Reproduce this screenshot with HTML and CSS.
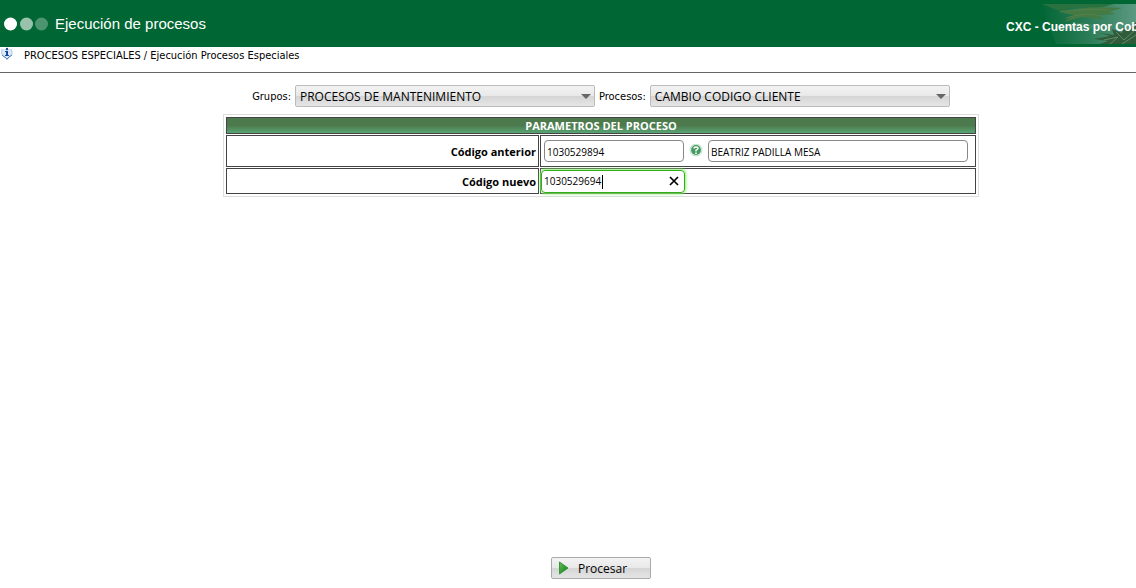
FILE: index.html
```html
<!DOCTYPE html>
<html lang="es">
<head>
  <meta charset="UTF-8">
  <meta name="viewport" content="width=device-width, initial-scale=1.0">
  <title>Ejecución de procesos</title>
  <link rel="stylesheet" href="styles.css">
</head>
<body>
  <header class="header">
    <svg class="dots" width="46" height="14" viewBox="0 0 46 14" aria-hidden="true">
      <circle cx="6.500" cy="7" r="6.5" fill="#fff"/>
      <circle cx="22.500" cy="7" r="6.5" fill="#99c2ad"/>
      <circle cx="37.500" cy="7" r="6.5" fill="#4d9470"/>
    </svg>
    <h1>Ejecución de procesos</h1>
    <div class="module">
      <svg class="leaves" width="96" height="40" viewBox="0 0 96 40" aria-hidden="true">
        <defs>
          <linearGradient id="fade" x1="0" x2="1" y1="0" y2="0">
            <stop offset="0" stop-color="#006633"/>
            <stop offset=".5" stop-color="#2b7c57"/>
            <stop offset="1" stop-color="#5c9a82"/>
          </linearGradient>
        </defs>
        <path d="M0 0H96V40H16Z" fill="url(#fade)"/>
        <path d="M2 0H74L56 5L36 3L22 8Z" fill="#2a7140"/>
        <path d="M22 9Q42 1 82 4L68 8L76 10L58 11L64 15L42 13L24 18L34 11Z" fill="#457a43"/>
        <path d="M26 14Q44 8 62 12M20 8Q40 4 70 6" stroke="#55804d" fill="none"/>
        <path d="M14 22L40 19L70 23L50 25L30 25Z" fill="#3d8763"/>
        <path d="M60 40L68 37L54 35L70 32L60 29L74 31L72 25L82 29L84 22L89 27L96 18V40Z" fill="#315b3b"/>
        <path d="M64 36L78 33L70 40M76 28L84 36L96 25M82 40L96 31" stroke="#5c8d66" fill="none"/>
      </svg>
      <span class="module-name">CXC - Cuentas por Cobrar</span>
    </div>
  </header>

  <nav class="breadcrumb">
    <svg width="14" height="14" viewBox="0 0 14 14" aria-hidden="true">
      <path d="M2 2Q0 8 5 10L7 13L9 10Q14 8 11 2" fill="#dce8f8" stroke="#b5cbe8"/>
      <path d="M2 8Q4 10 5 10L7 12L9 10L12 8" fill="none" stroke="#5584c4"/>
      <circle cx="7" cy="2" r="1.2" fill="#174a9c"/>
      <path d="M5 4H8V8H9V9H5V8H6V5H5Z" fill="#174a9c"/>
    </svg>
    <span>PROCESOS ESPECIALES / Ejecución Procesos Especiales</span>
  </nav>

  <form class="content">
    <div class="filters">
      <label for="grupos">Grupos:</label>
      <div class="select">
        <select id="grupos">
          <option>PROCESOS DE MANTENIMIENTO</option>
        </select>
      </div>
      <label for="procesos">Procesos:</label>
      <div class="select">
        <select id="procesos">
          <option>CAMBIO CODIGO CLIENTE</option>
        </select>
      </div>
    </div>

    <table class="params">
      <colgroup>
        <col class="label-col">
        <col>
      </colgroup>
      <thead>
        <tr><th colspan="2" class="title">PARAMETROS DEL PROCESO</th></tr>
      </thead>
      <tbody>
        <tr class="previous">
          <th scope="row"><label for="anterior">Código anterior</label></th>
          <td>
            <div class="fields">
              <input id="anterior" class="code" type="text" value="1030529894">
              <button type="button" class="help" aria-label="Buscar cliente">
                <svg width="14" height="14" viewBox="0 0 14 14" aria-hidden="true">
                  <circle cx="7" cy="6" r="6" fill="#e4f2e8" stroke="#b4d9c0" stroke-width=".8"/>
                  <circle cx="7" cy="6" r="4.900" fill="#459a62"/>
                  <path d="M5 4.500Q5 3 7 3T9 4.500Q9 5.500 7 6.200V7.500" fill="none" stroke="#fff" stroke-width="1.400"/>
                  <circle cx="7" cy="9.200" r=".9" fill="#fff"/>
                </svg>
              </button>
              <input class="name" type="text" value="BEATRIZ PADILLA MESA" aria-label="Nombre del cliente">
            </div>
          </td>
        </tr>
        <tr class="next">
          <th scope="row"><label for="nuevo">Código nuevo</label></th>
          <td>
            <div class="active-field">
              <input id="nuevo" type="text" value="1030529694">
              <span class="caret"></span>
              <button type="button" class="clear" aria-label="Borrar">
                <svg width="10" height="10" viewBox="0 0 10 10" aria-hidden="true">
                  <path d="M1 1L9 9M9 1L1 9" stroke="#000" stroke-width="1.700"/>
                </svg>
              </button>
            </div>
          </td>
        </tr>
      </tbody>
    </table>

    <button type="submit" class="process">
      <svg width="12" height="14" viewBox="0 0 12 14" aria-hidden="true">
        <defs>
          <linearGradient id="play" x1="0" x2="1" y1="0" y2="1">
            <stop offset="0" stop-color="#67bd63"/>
            <stop offset="1" stop-color="#087d0b"/>
          </linearGradient>
        </defs>
        <path d="M1.500 1L10 7L1.500 13Z" fill="url(#play)" stroke="#35963a"/>
      </svg>
      Procesar
    </button>
  </form>
</body>
</html>
```

FILE: styles.css
```css
* {
  box-sizing: border-box;
}
body {
  display: flex;
  flex-direction: column;
  min-height: 100vh;
  margin: 0;
  background: #fff;
  color: #000;
  font: 11px "DejaVu Sans Condensed", "DejaVu Sans", sans-serif;
}
button,
input,
select {
  color: #000;
  font-family: "Open Sans", "Noto Sans", sans-serif;
}
svg {
  display: block;
}

/* header */
.header {
  display: flex;
  align-items: center;
  height: 47px;
  padding-left: 4px;
  background: #006633;
  color: #fff;
  font-family: "Liberation Sans", Arial, sans-serif;
}
.header h1 {
  margin: 0 0 0 5px;
  font-size: 15px;
  font-weight: normal;
}
.module {
  position: relative;
  display: flex;
  align-items: center;
  width: 130px;
  height: 47px;
  margin-left: auto;
  padding-top: 6px;
  overflow: hidden;
  white-space: nowrap;
}
.leaves {
  position: absolute;
  top: 4px;
  right: 0;
}
.module-name {
  position: relative;
  font-size: 12px;
  font-weight: bold;
}

/* breadcrumb */
.breadcrumb {
  display: flex;
  gap: 10px;
  height: 26px;
  border-bottom: 1px solid #666;
  line-height: 18px;
}

/* content */
.content {
  display: flex;
  flex: 1;
  flex-direction: column;
  align-items: center;
  padding: 12px 0 9px 66px;
}
.filters {
  display: flex;
  align-items: center;
  gap: 4px;
  margin-bottom: 7px;
}
.select {
  position: relative;
  width: 300px;
}
.select::after {
  content: "";
  position: absolute;
  top: 9px;
  right: 4px;
  border: 5px solid transparent;
  border-top-color: #666;
  border-bottom: 0;
  pointer-events: none;
}
select,
.process {
  height: 22px;
  border: 1px solid #aaa;
  border-radius: 2px;
  background: linear-gradient(#f3f3f3, #e8e8e8 50%, #d5d5d5 51%, #e5e5e5);
  font-size: 12px;
}
select {
  display: block;
  width: 100%;
  padding: 0 20px 0 4px;
  border-color: #bbb;
  appearance: none;
}

/* parameters table */
.params {
  width: 756px;
  max-width: 100%;
  padding: 1px;
  border: 1px solid #ddd;
  border-spacing: 1px;
  table-layout: fixed;
}
.label-col {
  width: 313px;
}
.params th {
  padding: 0 2px;
  border: 1px solid #444;
  font-family: "Open Sans", "Noto Sans", sans-serif;
}
.params td {
  padding: 0 3px;
  border: 1px solid #444;
}
.params tbody th {
  text-align: right;
}
.params .title {
  height: 17px;
  background: linear-gradient(#4d7a4d, #4d7a4d 50%, #58a574);
  color: #fff;
  line-height: 15px;
}
.previous {
  height: 32px;
}
.next {
  height: 26px;
}
.next td {
  padding: 0;
}
.fields {
  display: flex;
  align-items: center;
  gap: 5px;
}
.fields input {
  height: 22px;
  padding: 1px 2px 0;
  border: 1px solid #888;
  border-radius: 4px;
  font-size: 10px;
}
.code {
  width: 140px;
}
.name {
  width: 260px;
}
.help,
.clear {
  padding: 0;
  border: 0;
  background: none;
}
.active-field {
  position: relative;
  display: flex;
  align-items: center;
  width: 144px;
  height: 23px;
  padding-right: 5px;
  border: 1px solid #2fae16;
  border-radius: 4px;
  box-shadow: 0 0 3px 1px #8cf06f;
}
.active-field input {
  flex: 1;
  min-width: 0;
  padding: 0 2px;
  border: 0;
  background: none;
  font-size: 10px;
  outline: 0;
}
.caret {
  position: absolute;
  top: 4px;
  left: 60px;
  width: 1px;
  height: 14px;
  background: #000;
}

/* process button */
.process {
  display: flex;
  align-items: center;
  gap: 8px;
  width: 100px;
  margin-top: auto;
  padding: 0 6px;
}
```
